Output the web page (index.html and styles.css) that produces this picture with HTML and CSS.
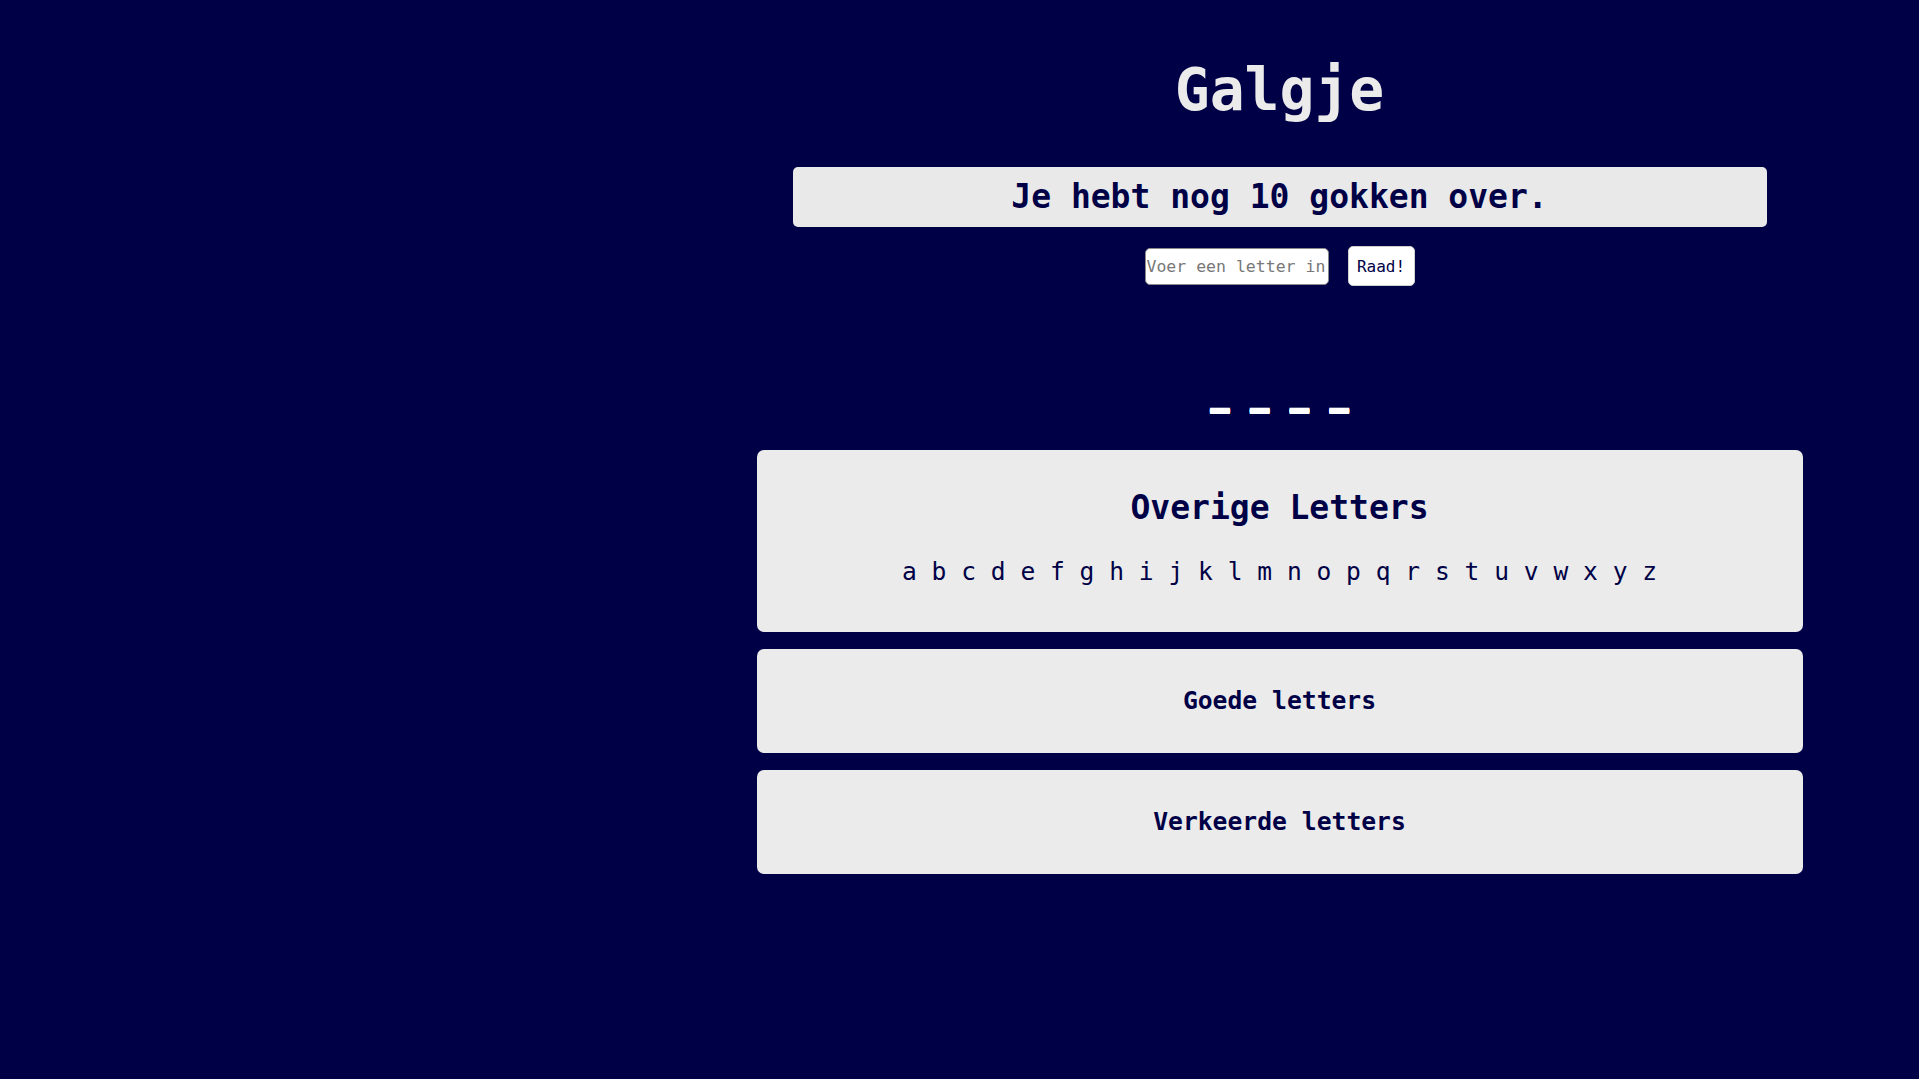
FILE: index.html
```html
<!DOCTYPE html>
<html lang="nl">
<head>
<meta charset="utf-8">
<title>Galgje</title>
<link rel="stylesheet" href="styles.css">
</head>
<body>
<div class="page">
  <aside class="gallows"></aside>
  <main class="game">
    <h1 class="title">Galgje</h1>
    <div class="status">Je hebt nog 10 gokken over.</div>
    <form class="guess">
      <input class="guess-input" type="text" placeholder="Voer een letter in">
      <button class="guess-btn" type="button">Raad!</button>
    </form>
    <div class="word">_ _ _ _</div>
    <section class="card card-remaining">
      <h2 class="card-title">Overige Letters</h2>
      <p class="letters">a b c d e f g h i j k l m n o p q r s t u v w x y z</p>
    </section>
    <section class="card">
      <h3 class="card-sub">Goede letters</h3>
    </section>
    <section class="card">
      <h3 class="card-sub">Verkeerde letters</h3>
    </section>
  </main>
</div>
</body>
</html>
```

FILE: styles.css
```css
* { box-sizing: border-box; }

html, body {
  margin: 0;
  padding: 0;
  background: #000046;
  height: 100%;
}

body {
  font-family: "DejaVu Sans Mono", "Liberation Mono", monospace;
  color: #000046;
}

.page {
  display: flex;
  min-height: 1079px;
}

.gallows {
  width: 640px;
  flex: none;
}

.game {
  flex: 1;
  display: flex;
  flex-direction: column;
  align-items: center;
  padding-top: 61px;
}

.title {
  margin: 0;
  font-size: 58px;
  line-height: 58px;
  font-weight: bold;
  color: #ebebeb;
}

.status {
  margin-top: 48px;
  width: 974px;
  height: 60px;
  background: #e9e9e9;
  border-radius: 5px;
  text-align: center;
  font-size: 33px;
  line-height: 60px;
  font-weight: bold;
}

.guess {
  margin: 19px 0 0;
  display: flex;
  align-items: center;
  gap: 19px;
  height: 40px;
}

.guess-input {
  width: 184px;
  height: 37px;
  padding: 0 1px;
  border: 1px solid #8a8a8a;
  border-radius: 5px;
  background: #fff;
  font-family: "DejaVu Sans Mono", "Liberation Mono", monospace;
  font-size: 16.5px;
  color: #000046;
  outline: none;
}

.guess-input::placeholder {
  color: #777;
}

.guess-btn {
  width: 67px;
  height: 40px;
  padding: 0;
  border: 1px solid #d0d0d0;
  border-radius: 5px;
  background: #fff;
  font-family: "DejaVu Sans Mono", "Liberation Mono", monospace;
  font-size: 16px;
  color: #000046;
}

.word {
  margin-top: 87px;
  font-size: 33px;
  line-height: 40px;
  font-weight: bold;
  color: #fff;
  white-space: pre;
  text-shadow: 0 1px 0 #fff, 0 2px 0 #fff, 0 -1px 0 #fff;
}

.card {
  width: 1046px;
  background: #ebebeb;
  border-radius: 7px;
  text-align: center;
  padding: 37px 0;
  margin-top: 17px;
}

.card-remaining {
  margin-top: 37px;
  padding: 38px 0 46px;
}

.card-title {
  margin: 0;
  font-size: 33px;
  line-height: 40px;
  font-weight: bold;
}

.letters {
  margin: 28px 0 0;
  font-size: 24.6px;
  line-height: 30px;
  transform: translateY(1px);
}

.card-sub {
  margin: 0;
  font-size: 24.7px;
  line-height: 30px;
  font-weight: bold;
}
```
